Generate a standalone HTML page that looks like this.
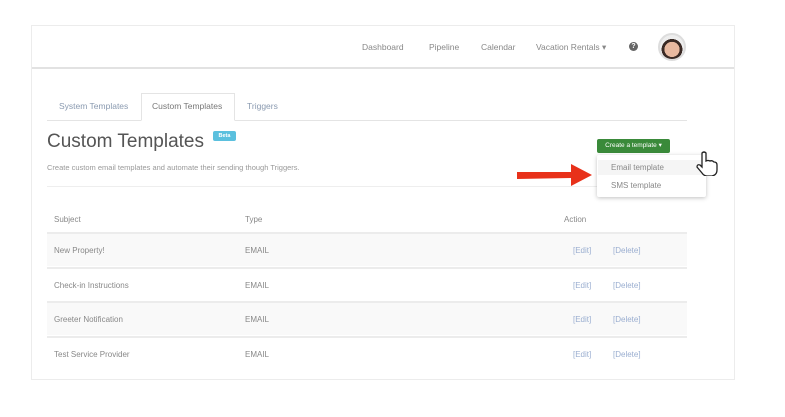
<!DOCTYPE html>
<html><head><style>
*{margin:0;padding:0;box-sizing:border-box}
body{width:785px;height:417px;background:#fff;font-family:"Liberation Sans",sans-serif;position:relative;overflow:hidden;color:#777}
.card{position:absolute;left:31px;top:25px;width:704px;height:355px;border:1px solid #ececec}
.hdr{position:absolute;left:0;top:0;width:702px;height:43px;border-bottom:2px solid #e2e2e2}
.nav{position:absolute;font-size:8.5px;color:#888}
.t{position:absolute;font-size:8px;color:#888}
.tabs{position:absolute;left:47px;top:120px;width:640px;border-bottom:1px solid #e4e4e4}
.tab{position:absolute;font-size:8.5px;color:#8a9ab0}
.row{position:absolute;left:47px;width:640px;height:34px;border-top:2px solid #ececec}
.row span{position:absolute;top:12px;font-size:8px;color:#888}
.lnk{color:#9aaed0 !important}
</style></head><body>
<div class="card">
<div class="hdr"></div>
</div>
<div class="nav" style="left:362px;top:42px">Dashboard</div>
<div class="nav" style="left:429px;top:42px">Pipeline</div>
<div class="nav" style="left:481px;top:42px">Calendar</div>
<div class="nav" style="left:536px;top:42px">Vacation Rentals ▾</div>
<div style="position:absolute;left:629px;top:42px;width:9px;height:9px;border-radius:50%;background:#666;color:#fff;font-size:7px;text-align:center;line-height:9px;font-weight:bold">?</div>
<div style="position:absolute;left:658px;top:33px;width:28px;height:28px;border-radius:50%;border:2px solid #ddd;background:radial-gradient(circle at 50% 60%,#e8b9a0 0 40%,#3a2a25 41% 55%,#eee 56%)"></div>
<div class="tabs"></div>
<div style="position:absolute;left:141px;top:93px;width:94px;height:28px;border:1px solid #e4e4e4;border-bottom:1px solid #fff;background:#fff"></div>
<div class="tab" style="left:59px;top:101px">System Templates</div>
<div class="tab" style="left:152px;top:101px;color:#777">Custom Templates</div>
<div class="tab" style="left:247px;top:101px">Triggers</div>
<div style="position:absolute;left:47px;top:131px;font-size:19px;color:#555">Custom Templates</div>
<div style="position:absolute;left:213px;top:131px;width:23px;height:10px;background:#5bc0de;border-radius:2px;color:#fff;font-size:5.5px;text-align:center;line-height:10px;font-weight:bold">Beta</div>
<div style="position:absolute;left:47px;top:163px;font-size:7.5px;color:#999">Create custom email templates and automate their sending though Triggers.</div>
<div style="position:absolute;left:47px;top:186px;width:640px;border-top:1px solid #eee"></div>
<div style="position:absolute;left:597px;top:139px;width:73px;height:14px;background:#3a8a3a;border-radius:2px;color:#fff;font-size:6.5px;text-align:center;line-height:14px">Create a template ▾</div>
<div style="position:absolute;left:597px;top:155px;width:109px;height:42px;background:#fff;box-shadow:0 1px 4px rgba(0,0,0,.25);border-radius:2px"></div>
<div style="position:absolute;left:598px;top:160px;width:107px;height:15px;background:#f5f5f5"></div>
<div style="position:absolute;left:611px;top:163px;font-size:8px;color:#888">Email template</div>
<div style="position:absolute;left:611px;top:181px;font-size:8px;color:#888">SMS template</div>
<svg style="position:absolute;left:515px;top:162px" width="80" height="26"><path d="M2 10 L56 10 L56 2 L77 13 L56 24 L56 16 L2 17 Z" fill="#e8311a"/></svg>
<svg style="position:absolute;left:696px;top:150px" width="24" height="26"><path d="M6 3 q2-2 4 0 v8 q2-1 4 0 q2-1 4 1 q3 0 3 3 v5 q0 5-5 6 h-5 q-3 0-5-3 l-5-6 q0-3 3-2 l2 2 z" fill="#fff" stroke="#222" stroke-width="1.3"/></svg>
<div class="t" style="left:54px;top:215px">Subject</div>
<div class="t" style="left:245px;top:215px">Type</div>
<div class="t" style="left:564px;top:215px">Action</div>
<div class="row" style="top:232px;background:#f9f9f9"><span style="left:7px">New Property!</span><span style="left:198px">EMAIL</span><span class="lnk" style="left:526px">[Edit]</span><span class="lnk" style="left:566px">[Delete]</span></div>
<div class="row" style="top:267px"><span style="left:7px">Check-in Instructions</span><span style="left:198px">EMAIL</span><span class="lnk" style="left:526px">[Edit]</span><span class="lnk" style="left:566px">[Delete]</span></div>
<div class="row" style="top:301px;background:#f9f9f9"><span style="left:7px">Greeter Notification</span><span style="left:198px">EMAIL</span><span class="lnk" style="left:526px">[Edit]</span><span class="lnk" style="left:566px">[Delete]</span></div>
<div class="row" style="top:336px"><span style="left:7px">Test Service Provider</span><span style="left:198px">EMAIL</span><span class="lnk" style="left:526px">[Edit]</span><span class="lnk" style="left:566px">[Delete]</span></div>
</body></html>
